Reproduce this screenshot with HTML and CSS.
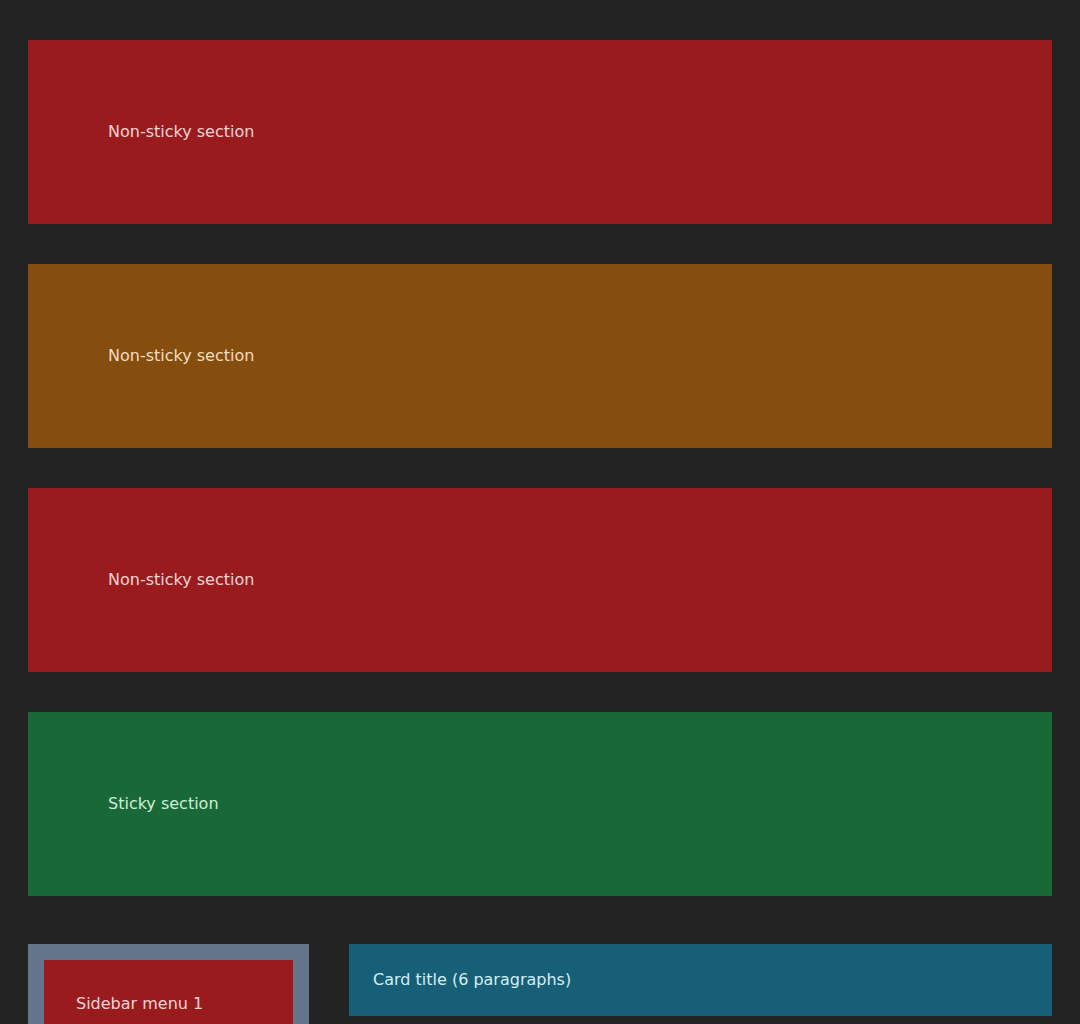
FILE: index.html
```html
<!DOCTYPE html>
<html lang="en">
<head>
<meta charset="utf-8">
<title>Sticky sections</title>
<link rel="stylesheet" href="styles.css">
</head>
<body>
<main class="page">
  <section class="block block-red">Non-sticky section</section>
  <section class="block block-amber">Non-sticky section</section>
  <section class="block block-red">Non-sticky section</section>
  <section class="block block-green">Sticky section</section>
  <div class="layout">
    <aside class="sidebar">
      <div class="menu-item">Sidebar menu 1</div>
      <div class="menu-item">Sidebar menu 2</div>
    </aside>
    <div class="content">
      <div class="card-title">Card title (6 paragraphs)</div>
    </div>
  </div>
</main>
</body>
</html>
```
FILE: styles.css
```css
html, body {
  margin: 0;
  padding: 0;
  background: #232323;
  font-family: "DejaVu Sans", sans-serif;
  font-size: 16px;
  line-height: 24px;
}
.page {
  padding: 40px 28px;
  display: flex;
  flex-direction: column;
  gap: 40px;
}
.block {
  height: 184px;
  padding-left: 80px;
  display: flex;
  align-items: center;
  box-sizing: border-box;
}
.block-red { background: #991b1e; color: #f5d3d3; }
.block-amber { background: #854d0e; color: #f7dcbf; }
.block-green { background: #186838; color: #cdeed6; }
.layout {
  margin-top: 8px;
  display: flex;
  gap: 40px;
  align-items: flex-start;
}
.sidebar {
  width: 281px;
  flex: none;
  box-sizing: border-box;
  background: #64748b;
  padding: 16px;
  display: flex;
  flex-direction: column;
  gap: 16px;
}
.menu-item {
  background: #991b1e;
  color: #f5d3d3;
  padding: 32px;
  height: 184px;
  box-sizing: border-box;
}
.content {
  flex: 1;
}
.card-title {
  background: #175f76;
  color: #d3eef5;
  padding: 24px;
}
```
